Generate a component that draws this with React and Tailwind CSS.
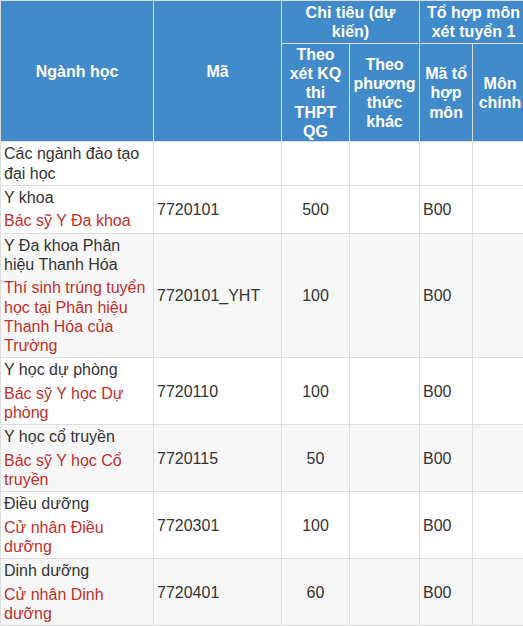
import React from "react";

const rows = [
  { name: "Các ngành đào tạo đại học", sub: null, code: "", quota: "", combo: "" },
  { name: "Y khoa", sub: "Bác sỹ Y Đa khoa", code: "7720101", quota: "500", combo: "B00" },
  {
    name: "Y Đa khoa Phân hiệu Thanh Hóa",
    sub: "Thí sinh trúng tuyển học tại Phân hiệu Thanh Hóa của Trường",
    code: "7720101_YHT",
    quota: "100",
    combo: "B00",
  },
  { name: "Y học dự phòng", sub: "Bác sỹ Y học Dự phòng", code: "7720110", quota: "100", combo: "B00" },
  { name: "Y học cổ truyền", sub: "Bác sỹ Y học Cổ truyền", code: "7720115", quota: "50", combo: "B00" },
  { name: "Điều dưỡng", sub: "Cử nhân Điều dưỡng", code: "7720301", quota: "100", combo: "B00" },
  { name: "Dinh dưỡng", sub: "Cử nhân Dinh dưỡng", code: "7720401", quota: "60", combo: "B00" },
];

const th = "border border-[#ddd] bg-[#428bca] text-white font-bold text-center align-middle px-[2px]";
const td = "border border-[#ddd] px-[3px] py-[2px] align-middle";

export default function App() {
  return (
    <div className="w-[523px] h-[626px] overflow-hidden bg-white">
      <table
        className="table-fixed border-collapse w-[527px] text-[16px] leading-[19.2px] text-[#333]"
        style={{ fontFamily: '"Liberation Sans", Arial, sans-serif' }}
      >
        <colgroup>
          <col className="w-[153px]" />
          <col className="w-[128px]" />
          <col className="w-[68px]" />
          <col className="w-[70px]" />
          <col className="w-[53px]" />
          <col className="w-[55px]" />
        </colgroup>
        <thead>
          <tr className="h-[43px]">
            <th rowSpan={2} className={th}>Ngành học</th>
            <th rowSpan={2} className={th}>Mã</th>
            <th colSpan={2} className={th + " py-[2px]"}>
              Chỉ tiêu (dự
              <br />
              kiến)
            </th>
            <th colSpan={2} className={th + " py-[2px]"}>Tổ hợp môn xét tuyển 1</th>
          </tr>
          <tr className="h-[98px]">
            <th className={th + " py-0"}>Theo xét KQ thi THPT QG</th>
            <th className={th + " py-0"}>Theo phương thức khác</th>
            <th className={th + " py-0"}>Mã tổ hợp môn</th>
            <th className={th + " py-0"}>Môn chính</th>
          </tr>
        </thead>
        <tbody>
          {rows.map((r, i) => (
            <tr key={i} className={i >= 2 && i % 2 === 0 ? "bg-[#f7f7f7]" : "bg-white"}>
              <td className={td + " align-top"}>
                <div>{r.name}</div>
                {r.sub && <div className="mt-[4.4px] text-[#c22f2b]">{r.sub}</div>}
              </td>
              <td className={td}>{r.code}</td>
              <td className={td + " text-center"}>{r.quota}</td>
              <td className={td}></td>
              <td className={td}>{r.combo}</td>
              <td className={td}></td>
            </tr>
          ))}
        </tbody>
      </table>
    </div>
  );
}
